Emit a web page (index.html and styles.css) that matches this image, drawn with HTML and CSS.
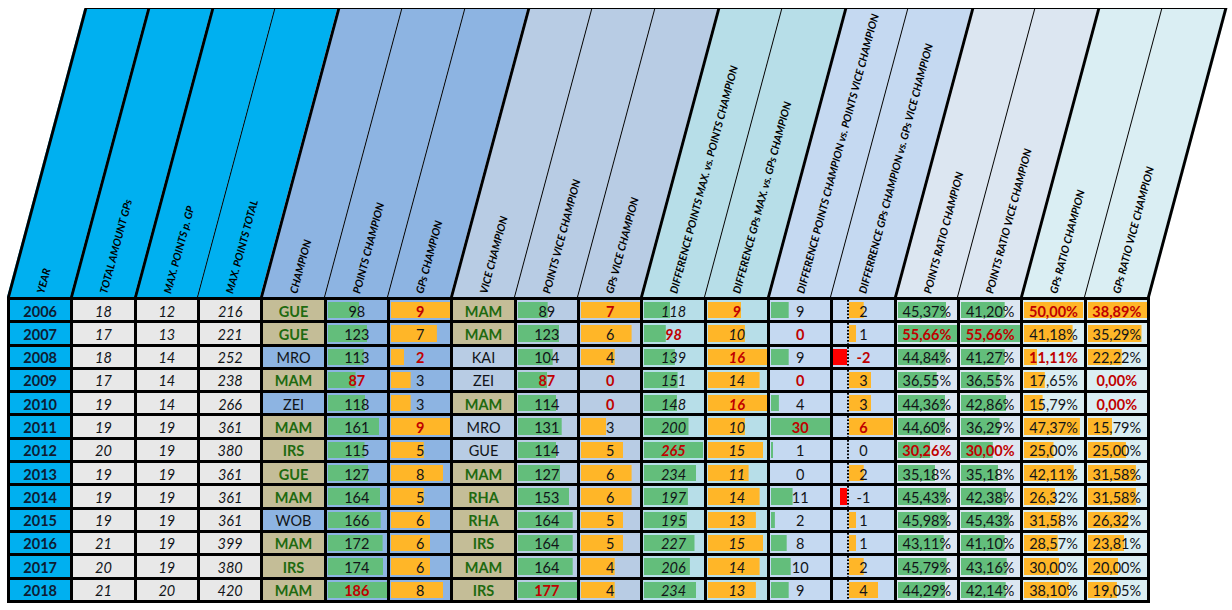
FILE: index.html
```html
<!DOCTYPE html>
<html lang="en">
<head>
<meta charset="utf-8">
<title>Championship statistics</title>
<link rel="stylesheet" href="styles.css">
</head>
<body>
<div class="sheet">
  <div class="head">
    <div class="hc k cy"><span>YEAR</span></div>
    <div class="hc k cy"><span>TOTAL AMOUNT GPs</span></div>
    <div class="hc k cy"><span>MAX. POINTS p. GP</span></div>
    <div class="hc cy"><span>MAX. POINTS TOTAL</span></div>
    <div class="hc k ch"><span>CHAMPION</span></div>
    <div class="hc ch"><span>POINTS CHAMPION</span></div>
    <div class="hc ch"><span>GPs CHAMPION</span></div>
    <div class="hc k vc"><span>VICE CHAMPION</span></div>
    <div class="hc vc"><span>POINTS VICE CHAMPION</span></div>
    <div class="hc vc"><span>GPs VICE CHAMPION</span></div>
    <div class="hc k dm"><span>DIFFERENCE POINTS MAX. vs. POINTS CHAMPION</span></div>
    <div class="hc dm"><span>DIFFERENCE GPs MAX. vs. GPs CHAMPION</span></div>
    <div class="hc k dv"><span>DIFFERENCE POINTS CHAMPION vs. POINTS VICE CHAMPION</span></div>
    <div class="hc dv"><span>DIFFERRENCE GPs CHAMPION vs. GPs VICE CHAMPION</span></div>
    <div class="hc k pr"><span>POINTS RATIO CHAMPION</span></div>
    <div class="hc pr"><span>POINTS RATIO VICE CHAMPION</span></div>
    <div class="hc k gr"><span>GPs RATIO CHAMPION</span></div>
    <div class="hc gr end"><span>GPs RATIO VICE CHAMPION</span></div>
  </div>

  <div class="grid">
    <!-- 2006 -->
    <div class="c y">2006</div><div class="c m">18</div><div class="c m">12</div><div class="c m">216</div>
    <div class="c t">GUE</div>
    <div class="c ch gb" style="--w:31.1px">98</div>
    <div class="c ch ob r" style="--w:59px">9</div>
    <div class="c t">MAM</div>
    <div class="c vc gb" style="--w:29.7px">89</div>
    <div class="c vc ob r" style="--w:59px">7</div>
    <div class="c dm gb i" style="--w:26.3px">118</div>
    <div class="c dm ob i r" style="--w:33.2px">9</div>
    <div class="c dv gb" style="--w:17.7px">9</div>
    <div class="c dv ax pos" style="--w:14.7px">2</div>
    <div class="c pr gb" style="--w:48.1px">45,37%</div>
    <div class="c pr gb" style="--w:43.7px">41,20%</div>
    <div class="c gr ob r" style="--w:59px">50,00%</div>
    <div class="c gr ob r" style="--w:59px">38,89%</div>
    <!-- 2007 -->
    <div class="c y">2007</div><div class="c m">17</div><div class="c m">13</div><div class="c m">221</div>
    <div class="c t">GUE</div>
    <div class="c ch gb" style="--w:39px">123</div>
    <div class="c ch ob" style="--w:45.9px">7</div>
    <div class="c t">MAM</div>
    <div class="c vc gb" style="--w:41px">123</div>
    <div class="c vc ob" style="--w:50.6px">6</div>
    <div class="c dm gb i r" style="--w:21.8px">98</div>
    <div class="c dm ob i" style="--w:36.9px">10</div>
    <div class="c dv gb r" style="--w:0px">0</div>
    <div class="c dv ax pos" style="--w:7.3px">1</div>
    <div class="c pr gb r" style="--w:59px">55,66%</div>
    <div class="c pr gb r" style="--w:59px">55,66%</div>
    <div class="c gr ob" style="--w:48.6px">41,18%</div>
    <div class="c gr ob" style="--w:53.5px">35,29%</div>
    <!-- 2008 -->
    <div class="c y">2008</div><div class="c m">18</div><div class="c m">14</div><div class="c m">252</div>
    <div class="c ch">MRO</div>
    <div class="c ch gb" style="--w:35.8px">113</div>
    <div class="c ch ob r" style="--w:13.1px">2</div>
    <div class="c vc">KAI</div>
    <div class="c vc gb" style="--w:34.7px">104</div>
    <div class="c vc ob" style="--w:33.7px">4</div>
    <div class="c dm gb i" style="--w:30.9px">139</div>
    <div class="c dm ob i r" style="--w:59px">16</div>
    <div class="c dv gb" style="--w:17.7px">9</div>
    <div class="c dv ax neg r" style="--w:14.7px">-2</div>
    <div class="c pr gb" style="--w:47.5px">44,84%</div>
    <div class="c pr gb" style="--w:43.7px">41,27%</div>
    <div class="c gr ob r" style="--w:13.1px">11,11%</div>
    <div class="c gr ob" style="--w:33.7px">22,22%</div>
    <!-- 2009 -->
    <div class="c y">2009</div><div class="c m">17</div><div class="c m">14</div><div class="c m">238</div>
    <div class="c t">MAM</div>
    <div class="c ch gb r" style="--w:27.6px">87</div>
    <div class="c ch ob" style="--w:19.7px">3</div>
    <div class="c vc">ZEI</div>
    <div class="c vc gb r" style="--w:29px">87</div>
    <div class="c vc ob r" style="--w:0px">0</div>
    <div class="c dm gb i" style="--w:33.6px">151</div>
    <div class="c dm ob i" style="--w:51.6px">14</div>
    <div class="c dv gb r" style="--w:0px">0</div>
    <div class="c dv ax pos" style="--w:22px">3</div>
    <div class="c pr gb" style="--w:38.7px">36,55%</div>
    <div class="c pr gb" style="--w:38.7px">36,55%</div>
    <div class="c gr ob" style="--w:20.8px">17,65%</div>
    <div class="c gr ob r" style="--w:0px">0,00%</div>
    <!-- 2010 -->
    <div class="c y">2010</div><div class="c m">19</div><div class="c m">14</div><div class="c m">266</div>
    <div class="c ch">ZEI</div>
    <div class="c ch gb" style="--w:37.4px">118</div>
    <div class="c ch ob" style="--w:19.7px">3</div>
    <div class="c t">MAM</div>
    <div class="c vc gb" style="--w:38px">114</div>
    <div class="c vc ob r" style="--w:0px">0</div>
    <div class="c dm gb i" style="--w:33px">148</div>
    <div class="c dm ob i r" style="--w:59px">16</div>
    <div class="c dv gb" style="--w:7.9px">4</div>
    <div class="c dv ax pos" style="--w:22px">3</div>
    <div class="c pr gb" style="--w:47px">44,36%</div>
    <div class="c pr gb" style="--w:45.4px">42,86%</div>
    <div class="c gr ob" style="--w:18.6px">15,79%</div>
    <div class="c gr ob r" style="--w:0px">0,00%</div>
    <!-- 2011 -->
    <div class="c y">2011</div><div class="c m">19</div><div class="c m">19</div><div class="c m">361</div>
    <div class="c t">MAM</div>
    <div class="c ch gb" style="--w:51.1px">161</div>
    <div class="c ch ob r" style="--w:59px">9</div>
    <div class="c vc">MRO</div>
    <div class="c vc gb" style="--w:43.7px">131</div>
    <div class="c vc ob" style="--w:25.3px">3</div>
    <div class="c dm gb i" style="--w:44.5px">200</div>
    <div class="c dm ob i" style="--w:36.9px">10</div>
    <div class="c dv gb r" style="--w:59px">30</div>
    <div class="c dv ax pos r" style="--w:44px">6</div>
    <div class="c pr gb" style="--w:47.3px">44,60%</div>
    <div class="c pr gb" style="--w:38.5px">36,29%</div>
    <div class="c gr ob" style="--w:55.9px">47,37%</div>
    <div class="c gr ob" style="--w:24px">15,79%</div>
    <!-- 2012 -->
    <div class="c y">2012</div><div class="c m">20</div><div class="c m">19</div><div class="c m">380</div>
    <div class="c t">IRS</div>
    <div class="c ch gb" style="--w:36.5px">115</div>
    <div class="c ch ob" style="--w:32.8px">5</div>
    <div class="c vc">GUE</div>
    <div class="c vc gb" style="--w:38px">114</div>
    <div class="c vc ob" style="--w:42.1px">5</div>
    <div class="c dm gb i r" style="--w:59px">265</div>
    <div class="c dm ob i" style="--w:55.3px">15</div>
    <div class="c dv gb" style="--w:2px">1</div>
    <div class="c dv ax pos" style="--w:0px">0</div>
    <div class="c pr gb r" style="--w:32.1px">30,26%</div>
    <div class="c pr gb r" style="--w:31.8px">30,00%</div>
    <div class="c gr ob" style="--w:29.5px">25,00%</div>
    <div class="c gr ob" style="--w:37.9px">25,00%</div>
    <!-- 2013 -->
    <div class="c y">2013</div><div class="c m">19</div><div class="c m">19</div><div class="c m">361</div>
    <div class="c t">GUE</div>
    <div class="c ch gb" style="--w:40.3px">127</div>
    <div class="c ch ob" style="--w:52.4px">8</div>
    <div class="c t">MAM</div>
    <div class="c vc gb" style="--w:42.3px">127</div>
    <div class="c vc ob" style="--w:50.6px">6</div>
    <div class="c dm gb i" style="--w:52.1px">234</div>
    <div class="c dm ob i" style="--w:40.6px">11</div>
    <div class="c dv gb" style="--w:0px">0</div>
    <div class="c dv ax pos" style="--w:14.7px">2</div>
    <div class="c pr gb" style="--w:37.3px">35,18%</div>
    <div class="c pr gb" style="--w:37.3px">35,18%</div>
    <div class="c gr ob" style="--w:49.7px">42,11%</div>
    <div class="c gr ob" style="--w:47.9px">31,58%</div>
    <!-- 2014 -->
    <div class="c y">2014</div><div class="c m">19</div><div class="c m">19</div><div class="c m">361</div>
    <div class="c t">MAM</div>
    <div class="c ch gb" style="--w:52px">164</div>
    <div class="c ch ob" style="--w:32.8px">5</div>
    <div class="c t">RHA</div>
    <div class="c vc gb" style="--w:51px">153</div>
    <div class="c vc ob" style="--w:50.6px">6</div>
    <div class="c dm gb i" style="--w:43.9px">197</div>
    <div class="c dm ob i" style="--w:51.6px">14</div>
    <div class="c dv gb" style="--w:21.6px">11</div>
    <div class="c dv ax neg" style="--w:7.3px">-1</div>
    <div class="c pr gb" style="--w:48.2px">45,43%</div>
    <div class="c pr gb" style="--w:44.9px">42,38%</div>
    <div class="c gr ob" style="--w:31.1px">26,32%</div>
    <div class="c gr ob" style="--w:47.9px">31,58%</div>
    <!-- 2015 -->
    <div class="c y">2015</div><div class="c m">19</div><div class="c m">19</div><div class="c m">361</div>
    <div class="c ch">WOB</div>
    <div class="c ch gb" style="--w:52.7px">166</div>
    <div class="c ch ob" style="--w:39.3px">6</div>
    <div class="c t">RHA</div>
    <div class="c vc gb" style="--w:54.7px">164</div>
    <div class="c vc ob" style="--w:42.1px">5</div>
    <div class="c dm gb i" style="--w:43.4px">195</div>
    <div class="c dm ob i" style="--w:47.9px">13</div>
    <div class="c dv gb" style="--w:3.9px">2</div>
    <div class="c dv ax pos" style="--w:7.3px">1</div>
    <div class="c pr gb" style="--w:48.7px">45,98%</div>
    <div class="c pr gb" style="--w:48.2px">45,43%</div>
    <div class="c gr ob" style="--w:37.3px">31,58%</div>
    <div class="c gr ob" style="--w:39.9px">26,32%</div>
    <!-- 2016 -->
    <div class="c y">2016</div><div class="c m">21</div><div class="c m">19</div><div class="c m">399</div>
    <div class="c t">MAM</div>
    <div class="c ch gb" style="--w:54.6px">172</div>
    <div class="c ch ob" style="--w:39.3px">6</div>
    <div class="c t">IRS</div>
    <div class="c vc gb" style="--w:54.7px">164</div>
    <div class="c vc ob" style="--w:42.1px">5</div>
    <div class="c dm gb i" style="--w:50.5px">227</div>
    <div class="c dm ob i" style="--w:55.3px">15</div>
    <div class="c dv gb" style="--w:15.7px">8</div>
    <div class="c dv ax pos" style="--w:7.3px">1</div>
    <div class="c pr gb" style="--w:45.7px">43,11%</div>
    <div class="c pr gb" style="--w:43.6px">41,10%</div>
    <div class="c gr ob" style="--w:33.7px">28,57%</div>
    <div class="c gr ob" style="--w:36.1px">23,81%</div>
    <!-- 2017 -->
    <div class="c y">2017</div><div class="c m">20</div><div class="c m">19</div><div class="c m">380</div>
    <div class="c t">IRS</div>
    <div class="c ch gb" style="--w:55.2px">174</div>
    <div class="c ch ob" style="--w:39.3px">6</div>
    <div class="c t">MAM</div>
    <div class="c vc gb" style="--w:54.7px">164</div>
    <div class="c vc ob" style="--w:33.7px">4</div>
    <div class="c dm gb i" style="--w:45.9px">206</div>
    <div class="c dm ob i" style="--w:51.6px">14</div>
    <div class="c dv gb" style="--w:19.7px">10</div>
    <div class="c dv ax pos" style="--w:14.7px">2</div>
    <div class="c pr gb" style="--w:48.5px">45,79%</div>
    <div class="c pr gb" style="--w:45.7px">43,16%</div>
    <div class="c gr ob" style="--w:35.4px">30,00%</div>
    <div class="c gr ob" style="--w:30.3px">20,00%</div>
    <!-- 2018 -->
    <div class="c y">2018</div><div class="c m">21</div><div class="c m">20</div><div class="c m">420</div>
    <div class="c t">MAM</div>
    <div class="c ch gb r" style="--w:59px">186</div>
    <div class="c ch ob" style="--w:52.4px">8</div>
    <div class="c t">IRS</div>
    <div class="c vc gb r" style="--w:59px">177</div>
    <div class="c vc ob" style="--w:33.7px">4</div>
    <div class="c dm gb i" style="--w:52.1px">234</div>
    <div class="c dm ob i" style="--w:47.9px">13</div>
    <div class="c dv gb" style="--w:17.7px">9</div>
    <div class="c dv ax pos" style="--w:29.3px">4</div>
    <div class="c pr gb" style="--w:46.9px">44,29%</div>
    <div class="c pr gb" style="--w:44.7px">42,14%</div>
    <div class="c gr ob" style="--w:45px">38,10%</div>
    <div class="c gr ob" style="--w:28.9px">19,05%</div>
  </div>
</div>
</body>
</html>
```

FILE: styles.css
```css
body {
  margin: 0;
  background: #ffffff;
  font-family: Lato, "Open Sans", sans-serif;
}

.sheet {
  padding: 8px 0 0 7px;
}

/* slanted header */
.head {
  display: flex;
  width: 1143px;
  height: 289px;
  box-sizing: border-box;
  border-top: 1.5px solid #000;
  transform: skewX(-15deg);
  transform-origin: 0 100%;
}

.hc {
  position: relative;
  flex: 0 0 63.333px;
  box-sizing: border-box;
  border-left: 1.2px solid #000;
}

.hc.k {
  border-left-width: 3px;
}

.hc.end {
  flex-basis: 66.333px;
  border-right: 3px solid #000;
}

.hc span {
  position: absolute;
  left: calc(50% + 5px);
  bottom: 2px;
  transform-origin: 0 100%;
  transform: skewX(15deg) rotate(-75deg);
  white-space: nowrap;
  font: italic 700 10.6px/1 Lato, "Open Sans", sans-serif;
  color: #000;
}

/* group colours */
.cy { background: #00b0f0; }
.ch { background-color: #8db4e2; }
.vc { background-color: #b8cce4; }
.dm { background-color: #b7dee8; }
.dv { background-color: #c5d9f1; }
.pr { background-color: #dce6f1; }
.gr { background-color: #daeef3; }

/* data grid */
.grid {
  display: grid;
  grid-template-columns: repeat(18, 1fr);
  grid-auto-rows: 20.3px;
  gap: 3px;
  padding: 3px;
  width: 1143px;
  box-sizing: border-box;
  background: #000;
}

.c {
  box-sizing: border-box;
  padding-top: 1.5px;
  font-size: 14.5px;
  line-height: 19px;
  text-align: center;
  white-space: nowrap;
  overflow: hidden;
  color: #111418;
}

.y {
  background: #00b0f0;
  font-weight: 700;
  color: #0e1c33;
}

.m {
  background: #e8e8e8;
  font-style: italic;
}

.i {
  font-style: italic;
}

.t {
  background: #c4bd97;
  font-weight: 700;
  color: #1e6a10;
}

.r {
  font-weight: 700;
  color: #c00000;
}

/* data bars */
.gb,
.ob {
  background-repeat: no-repeat;
  background-position: 1px 2px;
  background-size: var(--w) calc(100% - 3.7px);
}

.gb {
  background-image: linear-gradient(#63be7b, #63be7b);
}

.ob {
  background-image: linear-gradient(#ffb628, #ffb628);
}

/* bars around an axis */
.ax {
  background-image:
    linear-gradient(#000 60%, transparent 60%),
    linear-gradient(var(--bc), var(--bc));
  background-size: 1.5px 3.4px, var(--w) calc(100% - 3.7px);
  background-position: 14px 0, var(--x) 2px;
  background-repeat: repeat-y, no-repeat;
}

.ax.pos {
  --bc: #ffb628;
  --x: 15.5px;
}

.ax.neg {
  --bc: #ff0000;
  --x: calc(14px - var(--w));
}
```
